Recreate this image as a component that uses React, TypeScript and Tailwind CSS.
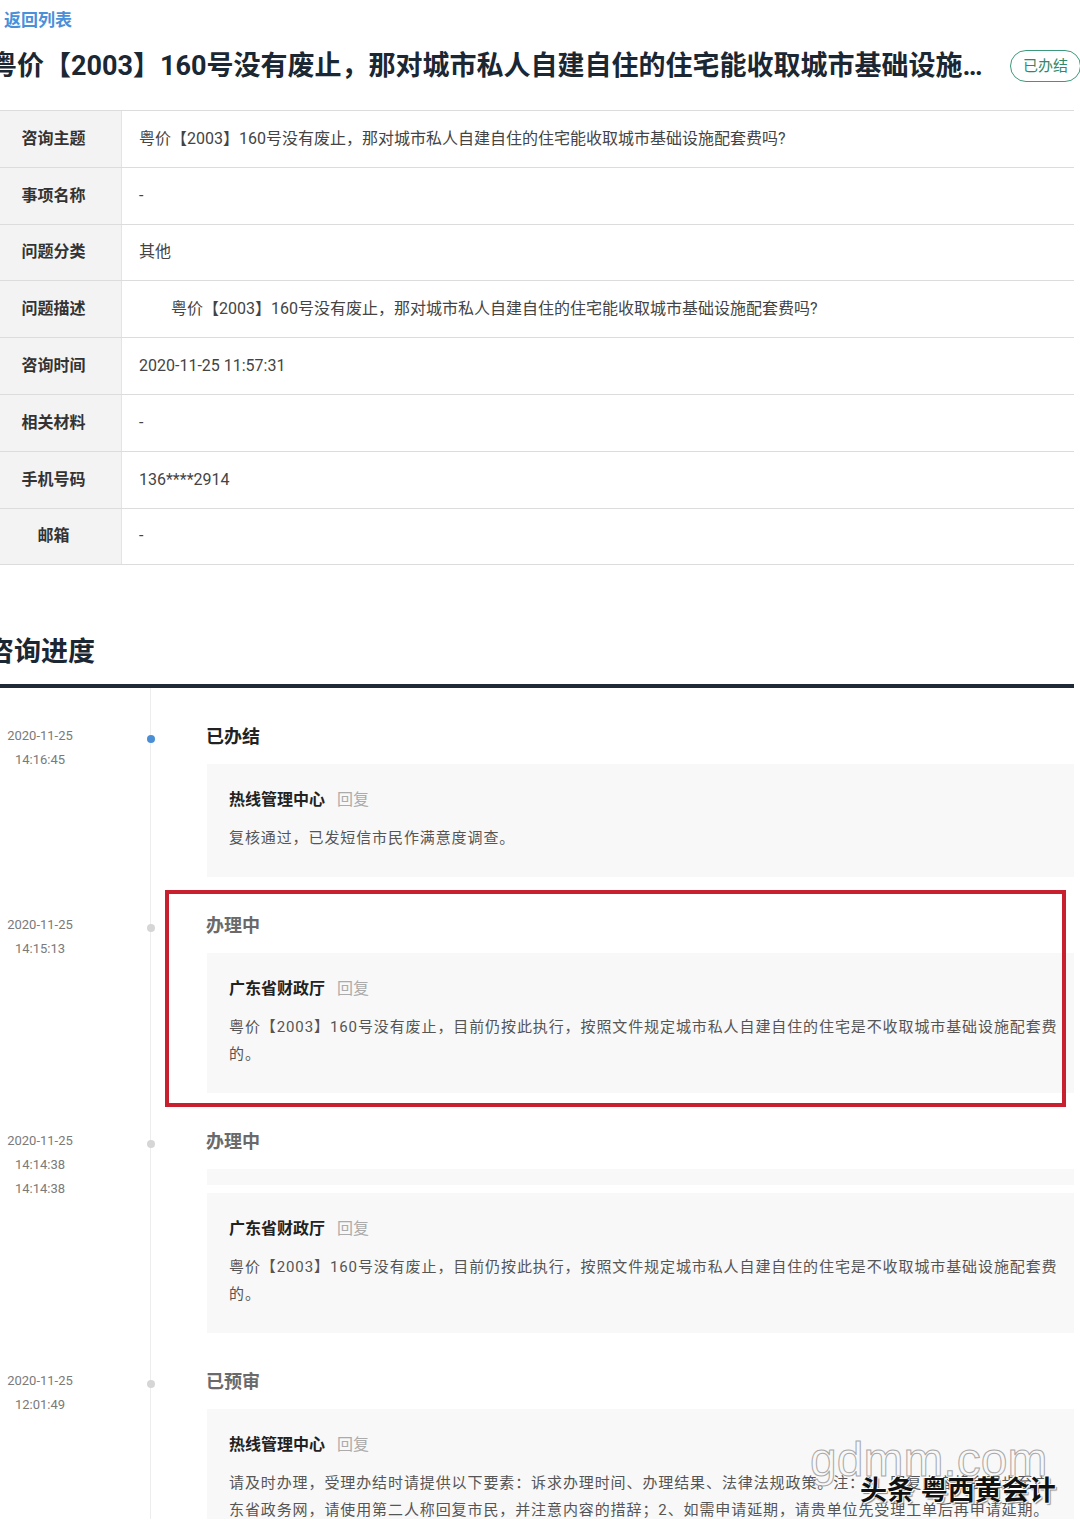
import React from "react";

type Reply = { org: string; text: string };
type Entry = {
  date: string;
  times: string[];
  status: string;
  active?: boolean;
  blank?: boolean;
  reply: Reply;
  marked?: boolean;
};

const rows = [
  { label: "咨询主题", value: "粤价【2003】160号没有废止，那对城市私人自建自住的住宅能收取城市基础设施配套费吗?" },
  { label: "事项名称", value: "-" },
  { label: "问题分类", value: "其他" },
  { label: "问题描述", value: "粤价【2003】160号没有废止，那对城市私人自建自住的住宅能收取城市基础设施配套费吗?", indent: true },
  { label: "咨询时间", value: "2020-11-25 11:57:31" },
  { label: "相关材料", value: "-" },
  { label: "手机号码", value: "136****2914" },
  { label: "邮箱", value: "-" },
];

const reply160 =
  "粤价【2003】160号没有废止，目前仍按此执行，按照文件规定城市私人自建自住的住宅是不收取城市基础设施配套费的。";

const entries: Entry[] = [
  {
    date: "2020-11-25",
    times: ["14:16:45"],
    status: "已办结",
    active: true,
    reply: { org: "热线管理中心", text: "复核通过，已发短信市民作满意度调查。" },
  },
  {
    date: "2020-11-25",
    times: ["14:15:13"],
    status: "办理中",
    marked: true,
    reply: { org: "广东省财政厅", text: reply160 },
  },
  {
    date: "2020-11-25",
    times: ["14:14:38", "14:14:38"],
    status: "办理中",
    blank: true,
    reply: { org: "广东省财政厅", text: reply160 },
  },
  {
    date: "2020-11-25",
    times: ["12:01:49"],
    status: "已预审",
    reply: {
      org: "热线管理中心",
      text: "请及时办理，受理办结时请提供以下要素：诉求办理时间、办理结果、法律法规政策。注：1、回复内容将会同步至广东省政务网，请使用第二人称回复市民，并注意内容的措辞；2、如需申请延期，请贵单位先受理工单后再申请延期。",
    },
  },
];

function TimelineRow({ entry }: { entry: Entry }) {
  return (
    <div className="relative flex">
      <div className="w-[108px] shrink-0 pt-[36px] text-center text-[13px] leading-[24px] text-[#7a7a7a]">
        <div>{entry.date}</div>
        {entry.times.map((t, i) => (
          <div key={i}>{t}</div>
        ))}
      </div>
      <div className="relative w-[57px] shrink-0 border-r border-[#ededed]">
        <span
          className={
            entry.active
              ? "absolute right-[-4.5px] top-[47px] size-[8px] rounded-full bg-[#4a8fd6]"
              : "absolute right-[-4.5px] top-[47px] size-[8px] rounded-full bg-[#d6d6d6]"
          }
        />
      </div>
      <div className="relative flex-1 pl-[55px] pt-[36px]">
        <div
          className={
            entry.active
              ? "h-[26px] text-[18px] font-bold leading-[26px] text-[#222]"
              : "h-[26px] text-[18px] font-bold leading-[26px] text-[#6a6a6a]"
          }
        >
          {entry.status}
        </div>
        {entry.blank && <div className="ml-[1px] mt-[14px] h-[16px] bg-[#f8f8f8]" />}
        <div
          className={
            entry.blank
              ? "ml-[1px] mt-[8px] bg-[#f8f8f8] pb-[25px] pl-[22px] pr-[11px] pt-[24px]"
              : "ml-[1px] mt-[14px] bg-[#f8f8f8] pb-[25px] pl-[22px] pr-[11px] pt-[24px]"
          }
        >
          <div className="text-[16px] leading-[24px]">
            <span className="font-bold text-[#222]">{entry.reply.org}</span>
            <span className="ml-[12px] text-[#ababab]">回复</span>
          </div>
          <p className="mt-[13px] text-[15px] leading-[27px] tracking-[0.9px] text-[#555]">
            {entry.reply.text}
          </p>
        </div>
        {entry.marked && (
          <div className="pointer-events-none absolute bottom-[-14px] left-[14px] right-[8px] top-[13px] border-[4px] border-[#c8202e]" />
        )}
      </div>
    </div>
  );
}

export default function App() {
  return (
    <div className="relative h-[1519px] w-[1080px] overflow-hidden bg-white font-[Roboto,'Noto_Sans_CJK_SC',sans-serif]">
      <div className="-ml-[14px] w-[1088px]">
        <div className="h-[40px] pl-[18px] text-[17px] font-bold leading-[40px] text-[#4a90d9]">返回列表</div>

        <div className="flex h-[52px] items-center pl-[4px]">
          <h1 className="w-[1000px] shrink-0 truncate text-[27px] font-bold leading-[40px] text-[#1b2733]">
            粤价【2003】160号没有废止，那对城市私人自建自住的住宅能收取城市基础设施配套费吗?
          </h1>
          <span className="ml-[20px] shrink-0 rounded-full border-[1.5px] border-[#3c9a7b] px-[12px] text-[15px] leading-[30px] text-[#2f8a6a]">
            已办结
          </span>
        </div>

        <div className="mt-[18px] border-t border-[#dcdcdc]">
          {rows.map((r) => (
            <div key={r.label} className="flex h-[56.8px] border-b border-[#dcdcdc]">
              <div className="flex w-[136px] shrink-0 items-center justify-center border-r border-[#e4e4e4] bg-[#f3f3f3] text-[16px] font-bold text-[#333]">
                {r.label}
              </div>
              <div
                className={
                  r.indent
                    ? "flex items-center pl-[17px] indent-[2em] text-[16px] text-[#444]"
                    : "flex items-center pl-[17px] text-[16px] text-[#444]"
                }
              >
                <span>{r.value}</span>
              </div>
            </div>
          ))}
        </div>

        <h2 className="mt-[69px] pl-[1px] text-[27px] font-bold leading-[36px] text-[#1b2733]">咨询进度</h2>
        <div className="mt-[14px] h-[4px] bg-[#1f2a36]" />

        <div>
          {entries.map((e, i) => (
            <TimelineRow key={i} entry={e} />
          ))}
        </div>
      </div>

      <div className="pointer-events-none absolute left-[810px] top-[1432px] font-['Liberation_Sans',sans-serif] text-[48px] leading-[56px] text-transparent [-webkit-text-stroke:1px_#a8a8a8]">
        gdmm.com
      </div>
      <div className="pointer-events-none absolute left-[860px] top-[1474px] text-[27px] font-bold leading-[34px] text-[#111] [text-shadow:1px_1px_0_#fff,-1px_-1px_0_#fff,2px_2px_1px_#888]">
        头条 粤西黄会计
      </div>
    </div>
  );
}
